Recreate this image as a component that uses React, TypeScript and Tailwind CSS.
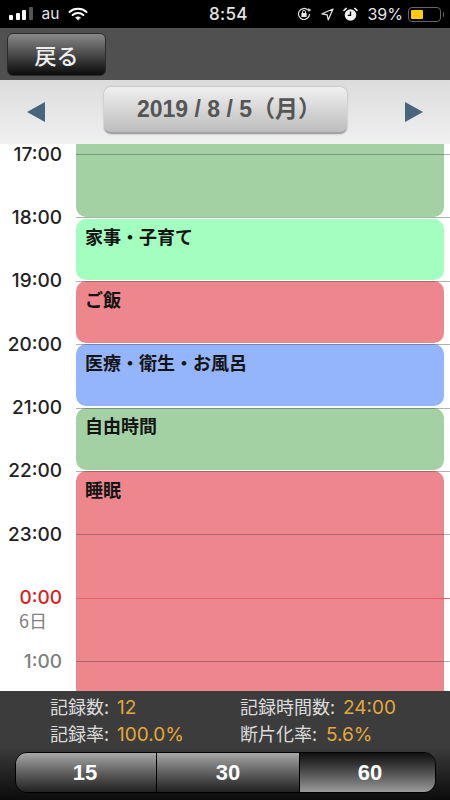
import React from "react";

const jp = "font-['Noto_Sans_CJK_JP',sans-serif]";

const hours = [
  { t: "17:00", c: "text-[#222222]" },
  { t: "18:00", c: "text-[#222222]" },
  { t: "19:00", c: "text-[#222222]" },
  { t: "20:00", c: "text-[#222222]" },
  { t: "21:00", c: "text-[#222222]" },
  { t: "22:00", c: "text-[#222222]" },
  { t: "23:00", c: "text-[#222222]" },
  { t: "0:00", c: "text-[#d81e1e]", sub: "6日" },
  { t: "1:00", c: "text-[#808080]" },
];

function Status() {
  return (
    <div className="h-[29px] bg-black flex items-center text-[#e4e4e4] font-['Inter',sans-serif] relative shrink-0 border-b border-[#555]">
      <div className="flex items-end gap-[2.5px] ml-[9px] h-[13px] mb-[1px]">
        <div className="w-[4px] h-[5px] bg-white rounded-[1px]" />
        <div className="w-[4px] h-[7px] bg-white rounded-[1px]" />
        <div className="w-[4px] h-[10px] bg-white rounded-[1px]" />
        <div className="w-[4px] h-[13px] bg-[#555] rounded-[1px]" />
      </div>
      <span className="ml-[9px] text-[15.5px] leading-none">au</span>
      <svg className="ml-[9px]" width="20" height="14" viewBox="0 0 20 14" fill="none" stroke="#fff" strokeLinecap="round">
        <path d="M1.5 5 C6 0.8 14 0.8 18.5 5" strokeWidth="2" />
        <path d="M4.6 8 C7.6 5.3 12.4 5.3 15.4 8" strokeWidth="2" />
        <path d="M10 13 L7.5 10.6 C9 9.5 11 9.5 12.5 10.6 Z" fill="#fff" strokeWidth="0.5" />
      </svg>
      <span className="absolute left-[209px] text-[17px] font-medium tracking-[0.3px] leading-none">8:54</span>
      <div className="ml-auto flex items-center mr-[6px]">
        <svg width="16" height="16" viewBox="0 0 16 16" fill="none" stroke="#e8e8e8">
          <path d="M13.5 8 A5.5 5.5 0 1 1 11.8 4" strokeWidth="1.2" />
          <path d="M12 2.5 L12.5 5.5 L15 4 Z" fill="#e8e8e8" strokeWidth="0.4" />
          <rect x="5.4" y="7" width="5.2" height="4" rx="0.6" fill="#e8e8e8" stroke="none" />
          <path d="M6.5 7 V5.8 A1.5 1.5 0 0 1 9.5 5.8 V7" strokeWidth="1" />
        </svg>
        <svg className="ml-[9px]" width="13" height="13" viewBox="0 0 13 13" fill="none" stroke="#e8e8e8" strokeWidth="1.2" strokeLinejoin="round">
          <path d="M12 1 L1 5.8 L6.2 6.8 L7.2 12 Z" />
        </svg>
        <svg className="ml-[9px]" width="15" height="15" viewBox="0 0 15 15">
          <circle cx="7.5" cy="8" r="5.8" fill="#f0f0f0" />
          <path d="M7.5 4.5 V8.3 H4.8" fill="none" stroke="#000" strokeWidth="1.3" />
          <path d="M1 3.4 L3.2 1.4 M14 3.4 L11.8 1.4" stroke="#f0f0f0" strokeWidth="1.5" strokeLinecap="round" />
        </svg>
        <span className="ml-[9px] text-[16px] leading-none">39%</span>
        <div className="ml-[5px] w-[33px] h-[15px] rounded-[4px] border border-[#666] p-[2px] flex">
          <div className="w-[12px] bg-[#fecb0a] rounded-[1px]" />
        </div>
        <div className="w-[1.5px] h-[5px] ml-[1.5px] bg-[#666] rounded-r-[1px]" />
      </div>
    </div>
  );
}

function Header() {
  return (
    <div className="h-[51px] bg-[#505050] flex items-center pl-[7px] shrink-0">
      <div className={`w-[99px] h-[43px] -mt-[1px] rounded-[6px] border border-[#2a2a2a] bg-gradient-to-b from-[#8a8a8a] via-[#4a4a4a] to-[#0c0c0c] flex items-center justify-center text-[#eeeeee] text-[22px] font-medium ${jp}`}>
        戻る
      </div>
    </div>
  );
}

function DateBar() {
  return (
    <div className="h-[64px] bg-gradient-to-b from-[#dcdcdc] to-[#f0f0f0] flex items-center justify-between pl-[27px] pr-[27px] shrink-0">
      <svg width="18" height="20" viewBox="0 0 18 20"><path d="M18 0 V20 L0 10 Z" fill="#48657f" /></svg>
      <div className="w-[243px] h-[47px] pl-[8px] rounded-[7px] bg-gradient-to-b from-[#f0f0f0] to-[#bdbdbd] border-b-2 border-[#a2a2a2] shadow-[0_0_2px_rgba(0,0,0,0.3)] flex items-center justify-center text-[#555555] text-[23px] font-bold font-['Liberation_Sans','Noto_Sans_CJK_JP',sans-serif] -mt-[3px] whitespace-pre">
        2019 / 8 / 5（月）
      </div>
      <svg width="18" height="20" viewBox="0 0 18 20"><path d="M0 0 V20 L18 10 Z" fill="#48657f" /></svg>
    </div>
  );
}

function Block({ label, color, h, rounded = "rounded-[10px]" }: { label?: string; color: string; h: string; rounded?: string }) {
  return (
    <div className={`${color} ${h} ${rounded} shrink-0 pl-[9px] pt-[5.5px] text-[#141414] text-[18px] leading-[24px] font-bold ${jp}`}>
      {label}
    </div>
  );
}

function Timeline() {
  return (
    <div className="flex-1 min-h-0 bg-white flex overflow-hidden">
      <div className="w-[76px] shrink-0 -mt-[21.7px] font-['Inter',sans-serif]">
        {hours.map((h) => (
          <div key={h.t} className="h-[63.4px] flex items-center justify-end pr-[14px] relative">
            <span className={`${h.c} text-[19px] font-medium leading-none`}>{h.t}</span>
            {h.sub && (
              <span className={`absolute left-[19px] top-[45px] text-[#808080] text-[18px] leading-none ${jp}`}>{h.sub}</span>
            )}
          </div>
        ))}
      </div>
      <div className="flex-1 relative pr-[6px] flex flex-col gap-[1.5px]">
        <Block color="bg-[#a3d1a3]" h="h-[73px]" rounded="rounded-b-[10px]" />
        <Block color="bg-[#a3ffbf]" h="h-[61px]" label="家事・子育て" />
        <Block color="bg-[#ee868e]" h="h-[61.5px]" label="ご飯" />
        <Block color="bg-[#94b4fb]" h="h-[62px]" label="医療・衛生・お風呂" />
        <Block color="bg-[#a3d1a3]" h="h-[62px]" label="自由時間" />
        <Block color="bg-[#ee868e]" h="h-[230px]" label="睡眠" />
        <div className="absolute inset-0 pt-[10px] flex flex-col pointer-events-none">
          {hours.map((h) => (
            <div
              key={h.t}
              className={`h-[63.4px] shrink-0 border-t ${h.t === "0:00" ? "border-[#e85f6b]" : "border-[rgba(60,60,60,0.4)]"}`}
            />
          ))}
        </div>
      </div>
    </div>
  );
}

function Stat({ k, v, gap = "ml-[4px]" }: { k: string; v: string; gap?: string }) {
  return (
    <div className={`text-[18px] leading-[24.5px] whitespace-pre text-[#dcdcdc] ${jp}`}>
      {k}: <span className={`text-[#e5a83b] text-[19px] font-['Inter',sans-serif] ${gap}`}>{v}</span>
    </div>
  );
}

function Stats() {
  return (
    <div className="h-[56px] bg-[#3c3c3c] shrink-0 grid grid-cols-[190px_1fr] pl-[50px] pt-[3px] content-start">
      <Stat k="記録数" v="12" />
      <Stat k="記録時間数" v="24:00" />
      <Stat k="記録率" v="100.0%" />
      <Stat k="断片化率" v="5.6%" gap="ml-[5px]" />
    </div>
  );
}

function Seg({ label, active, cls }: { label: string; active?: boolean; cls: string }) {
  return (
    <div
      className={`flex items-center justify-center text-white text-[22px] font-bold font-['Liberation_Sans',sans-serif] ${cls} ${
        active
          ? "bg-gradient-to-b from-[#111111] to-[#9a9a9a]"
          : "bg-gradient-to-b from-[#a8a8a8] to-[#222222]"
      }`}
    >
      {label}
    </div>
  );
}

function Segments() {
  return (
    <div className="h-[53px] bg-gradient-to-b from-[#3c3c3c] to-[#0c0c0c] pl-[15px] pr-[14px] pt-[5px] shrink-0">
      <div className="h-[41px] rounded-[12px] border border-black overflow-hidden flex">
        <Seg label="15" cls="w-[141px] pr-[2px] border-r border-black" />
        <Seg label="30" cls="w-[143px] border-r border-black" />
        <Seg label="60" active cls="flex-1 pl-[5px]" />
      </div>
    </div>
  );
}

export default function App() {
  return (
    <div className="w-[450px] h-[800px] flex flex-col overflow-hidden bg-white">
      <Status />
      <Header />
      <DateBar />
      <Timeline />
      <Stats />
      <Segments />
    </div>
  );
}
